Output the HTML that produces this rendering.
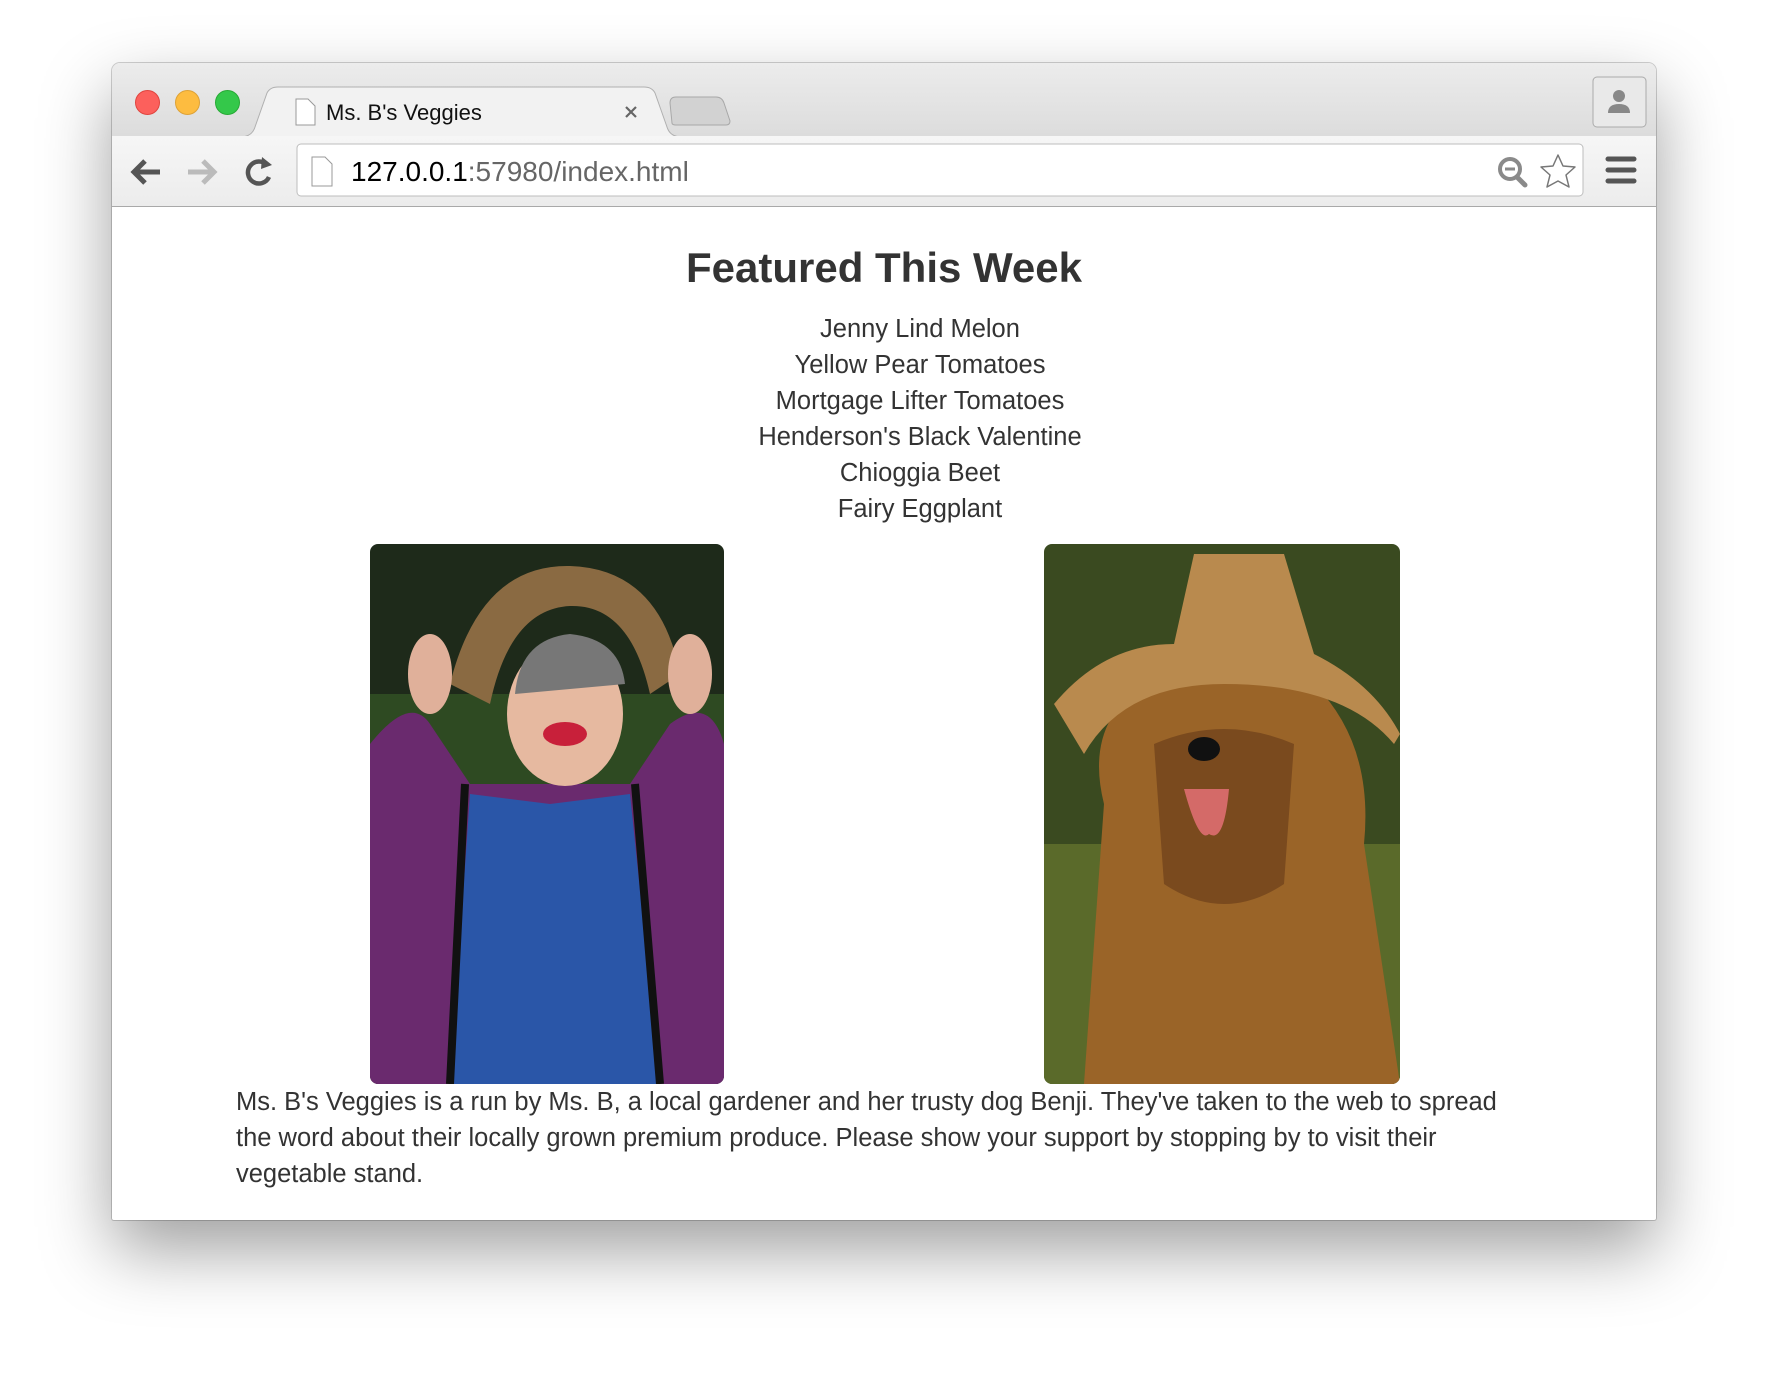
<!DOCTYPE html>
<html><head><meta charset="utf-8"><style>
html,body{margin:0;padding:0;width:1768px;height:1380px;background:#fff;overflow:hidden;font-family:"Liberation Sans",Arial,sans-serif}
.win{position:absolute;left:112px;top:63px;width:1544px;height:1157px;border-radius:8px 8px 2px 2px;background:#fff;box-shadow:0 30px 70px rgba(0,0,0,.38),0 0 0 1px rgba(0,0,0,.18);overflow:hidden}
.tabbar{position:absolute;left:0;top:0;width:100%;height:73px;background:linear-gradient(#ececec,#dcdcdc);border-bottom:1px solid #b4b4b4}
.toolbar{position:absolute;left:0;top:73px;width:100%;height:70px;background:linear-gradient(#f6f6f6,#ececec);border-bottom:1px solid #a9a9a9}
.dot{position:absolute;top:27px;width:23px;height:23px;border-radius:50%}
.t{position:absolute;color:#333;white-space:nowrap}
</style></head><body>
<div class="win">
 <div class="tabbar">
  <div class="dot" style="left:23px;background:#fc605c;border:1px solid #e0443e"></div>
  <div class="dot" style="left:63px;background:#fdbc40;border:1px solid #dea236"></div>
  <div class="dot" style="left:103px;background:#34c84a;border:1px solid #27aa35"></div>
  <svg style="position:absolute;left:0;top:0" width="1544" height="74">
   <path d="M128 74 Q140 74 143 64 L155 30 Q158 24 166 24 L532 24 Q540 24 543 30 L555 64 Q558 74 570 74" fill="#f2f2f2" stroke="#b0b0b0"/>
   <path d="M560 60 L558 40 Q558 34 564 34 L604 34 Q610 34 612 40 L618 58 Q618 62 614 62 L564 62 Q560 62 560 60Z" fill="#d2d2d2" stroke="#a8a8a8"/>
   <path d="M184 36 L196 36 L203 43 L203 62 L184 62 Z" fill="#fff" stroke="#999"/>
   <path d="M514 44 L524 54 M524 44 L514 54" stroke="#666" stroke-width="2.2"/>
   <rect x="1481" y="14" width="53" height="50" rx="4" fill="#e9e9e9" stroke="#aaa"/>
   <circle cx="1507" cy="33" r="6" fill="#888"/><path d="M1496 50 Q1496 41 1507 41 Q1518 41 1518 50Z" fill="#888"/>
  </svg>
  <div class="t" style="left:214px;top:37px;font-size:22px;color:#111">Ms. B's Veggies</div>
 </div>
 <div class="toolbar">
  <svg style="position:absolute;left:0;top:0" width="1544" height="70">
   <path d="M22 36 L48 36 M33 25 L22 36 L33 47" stroke="#555" stroke-width="5" fill="none"/>
   <path d="M76 36 L102 36 M91 25 L102 36 L91 47" stroke="#bbb" stroke-width="5" fill="none"/>
   <path d="M155 29 A11 11 0 1 0 157 41" stroke="#555" stroke-width="4.5" fill="none"/><path d="M150 21 L160 29 L149 33Z" fill="#555"/>
   <rect x="185" y="8" width="1286" height="52" rx="4" fill="#fff" stroke="#bdbdbd"/>
   <path d="M200 21 L213 21 L220 28 L220 50 L200 50 Z" fill="#fff" stroke="#999"/>
   <circle cx="1398" cy="33" r="10" fill="none" stroke="#8a8a8a" stroke-width="4"/><path d="M1393 33 L1403 33" stroke="#8a8a8a" stroke-width="3"/><path d="M1405 41 L1413 49" stroke="#8a8a8a" stroke-width="5" stroke-linecap="round"/>
   <path d="M1446 19 L1451 30 L1463 31 L1454 39 L1457 51 L1446 45 L1435 51 L1438 39 L1429 31 L1441 30Z" fill="#fff" stroke="#777" stroke-width="1.5" stroke-linejoin="round"/>
   <path d="M1496 23 L1522 23 M1496 34 L1522 34 M1496 45 L1522 45" stroke="#555" stroke-width="5" stroke-linecap="round"/>
  </svg>
  <div class="t" style="left:239px;top:20px;font-size:28px;color:#000">127.0.0.1<span style="color:#666">:57980/index.html</span></div>
 </div>
 <div class="t" style="left:0;width:1544px;text-align:center;top:181px;font-size:42px;font-weight:bold">Featured This Week</div>
 <div class="t" style="left:0;width:1616px;text-align:center;top:248px;font-size:25.5px;line-height:36px">Jenny Lind Melon<br>Yellow Pear Tomatoes<br>Mortgage Lifter Tomatoes<br>Henderson's Black Valentine<br>Chioggia Beet<br>Fairy Eggplant</div>
 <svg style="position:absolute;left:258px;top:481px" width="354" height="540">
  <defs><clipPath id="c1"><rect width="354" height="540" rx="8"/></clipPath></defs>
  <g clip-path="url(#c1)">
   <rect width="354" height="540" fill="#1e2a1a"/><rect y="150" width="354" height="200" fill="#2e4a22"/>
   <path d="M0 200 Q40 150 60 180 L100 240 L260 240 L300 180 Q340 150 354 200 L354 540 L0 540Z" fill="#6a2a6e"/>
   <path d="M100 250 L180 260 L260 250 L290 540 L80 540Z" fill="#2a56a8"/>
   <path d="M95 240 L80 540 M265 240 L290 540" stroke="#111" stroke-width="8"/>
   <ellipse cx="195" cy="170" rx="58" ry="72" fill="#e6b9a0"/>
   <path d="M145 150 Q150 95 200 90 Q250 95 255 140" fill="#777"/>
   <path d="M80 140 Q110 20 200 22 Q290 25 310 130 L280 150 Q260 60 200 62 Q140 65 120 160Z" fill="#8a6a42"/>
   <ellipse cx="195" cy="190" rx="22" ry="12" fill="#c8203a"/>
   <ellipse cx="60" cy="130" rx="22" ry="40" fill="#e0b09a"/><ellipse cx="320" cy="130" rx="22" ry="40" fill="#e0b09a"/>
  </g>
 </svg>
 <svg style="position:absolute;left:932px;top:481px" width="356" height="540">
  <defs><clipPath id="c2"><rect width="356" height="540" rx="8"/></clipPath></defs>
  <g clip-path="url(#c2)">
   <rect width="356" height="540" fill="#3a4a20"/><rect y="300" width="356" height="240" fill="#5a6a2a"/>
   <path d="M60 260 Q40 180 100 140 L270 140 Q330 200 320 300 L356 540 L40 540Z" fill="#9a6428"/>
   <path d="M110 200 Q180 170 250 200 L240 340 Q180 380 120 340Z" fill="#7a4a1e"/>
   <path d="M10 160 Q60 100 130 100 L150 10 L240 10 L270 110 Q330 140 356 190 L350 200 Q300 140 180 140 Q80 140 40 210Z" fill="#b98a4e"/>
   <ellipse cx="160" cy="205" rx="16" ry="12" fill="#111"/>
   <path d="M140 245 Q155 300 165 290 Q180 300 185 245Z" fill="#d46a68"/>
  </g>
 </svg>
 <div class="t" style="left:124px;top:1021px;width:1275px;white-space:normal;font-size:25.5px;line-height:36px">Ms. B's Veggies is a run by Ms. B, a local gardener and her trusty dog Benji. They've taken to the web to spread the word about their locally grown premium produce. Please show your support by stopping by to visit their vegetable stand.</div>
</div>
</body></html>
